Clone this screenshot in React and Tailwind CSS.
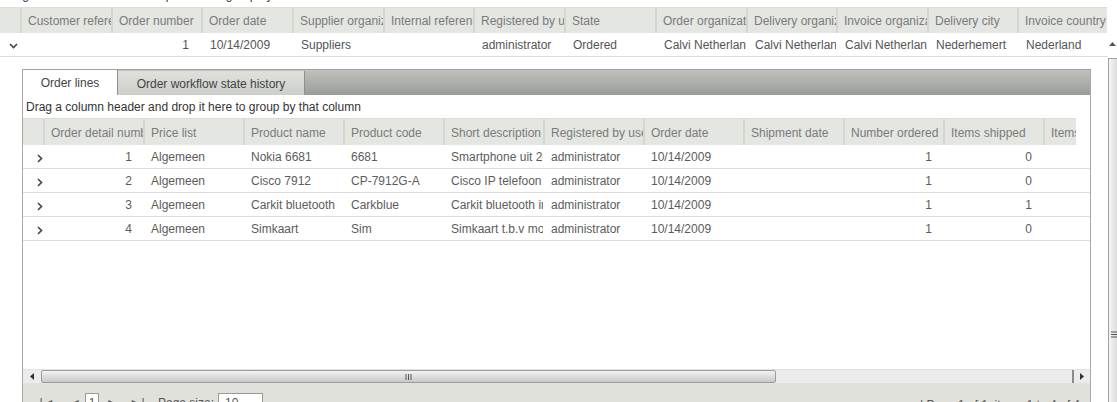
// OrderGrid.jsx
const orderCols = [
  { title: 'Customer reference', w: 'w-[91px]' },
  { title: 'Order number', w: 'w-[90px]' },
  { title: 'Order date', w: 'w-[91px]' },
  { title: 'Supplier organization', w: 'w-[91px]' },
  { title: 'Internal reference', w: 'w-[90px]' },
  { title: 'Registered by user', w: 'w-[91px]' },
  { title: 'State', w: 'w-[91px]' },
  { title: 'Order organization', w: 'w-[91px]' },
  { title: 'Delivery organization', w: 'w-[90px]' },
  { title: 'Invoice organization', w: 'w-[91px]' },
  { title: 'Delivery city', w: 'w-[90px]' },
  { title: 'Invoice country', w: 'w-[90px]' },
];

const order = [
  { v: '', align: 'left' },
  { v: '1', align: 'right' },
  { v: '10/14/2009', align: 'left' },
  { v: 'Suppliers', align: 'left' },
  { v: '', align: 'left' },
  { v: 'administrator', align: 'left' },
  { v: 'Ordered', align: 'left' },
  { v: 'Calvi Netherlands', align: 'left' },
  { v: 'Calvi Netherlands', align: 'left' },
  { v: 'Calvi Netherlands', align: 'left' },
  { v: 'Nederhemert', align: 'left' },
  { v: 'Nederland', align: 'left' },
];

const lineCols = [
  'Order detail number',
  'Price list',
  'Product name',
  'Product code',
  'Short description',
  'Registered by user',
  'Order date',
  'Shipment date',
  'Number ordered',
  'Items shipped',
];

const lines = [
  ['1', 'Algemeen', 'Nokia 6681', '6681', 'Smartphone uit 2005', 'administrator', '10/14/2009', '', '1', '0'],
  ['2', 'Algemeen', 'Cisco 7912', 'CP-7912G-A', 'Cisco IP telefoon', 'administrator', '10/14/2009', '', '1', '0'],
  ['3', 'Algemeen', 'Carkit bluetooth', 'Carkblue', 'Carkit bluetooth inbouw', 'administrator', '10/14/2009', '', '1', '1'],
  ['4', 'Algemeen', 'Simkaart', 'Sim', 'Simkaart t.b.v mobiel', 'administrator', '10/14/2009', '', '1', '0'],
];

const rightCols = [0, 8, 9];

const ChevronDown = () => (
  <svg width="9" height="6" viewBox="0 0 9 6">
    <path d="M1 1l3.5 3.5L8 1" fill="none" stroke="#444" strokeWidth="1.6" />
  </svg>
);

const ChevronRight = () => (
  <svg width="6" height="9" viewBox="0 0 6 9">
    <path d="M1 1l3.5 3.5L1 8" fill="none" stroke="#444" strokeWidth="1.6" />
  </svg>
);

const HeadCell = ({ title, w }) => (
  <div className={`${w} shrink-0 h-full flex items-center pt-px border-l-2 border-[#d4d6d1] pl-[6px] overflow-hidden whitespace-nowrap`}>
    {title}
  </div>
);

const App = () => {
  return (
    <div
      className="w-[1117px] h-[402px] overflow-hidden bg-white text-[12px] relative"
      style={{ fontFamily: '"Liberation Sans", Arial, sans-serif' }}
    >
      {/* group panel of the order grid, mostly scrolled out of view */}
      <div className="h-[7px] overflow-hidden">
        <div className="mt-[-14px] pl-[3px] leading-[18px] text-[#333] whitespace-nowrap">
          Drag a column header and drop it here to group by that column
        </div>
      </div>

      <div className="flex">
        <div className="w-[1108px] shrink-0">
          {/* order header */}
          <div className="h-[26px] flex bg-[#e3e6e1] text-[#7b7b7b] w-[1107px] border-t border-[#dcdcdc]">
            <div className="w-[20px] shrink-0" />
            {orderCols.map((c) => (
              <HeadCell key={c.title} title={c.title} w={c.w} />
            ))}
          </div>

          {/* order row */}
          <div className="h-[24px] flex items-center text-[#555] border-b border-[#dcdcdc]">
            <div className="w-[20px] shrink-0 flex justify-center pl-[6px] pt-[2px]">
              <ChevronDown />
            </div>
            {order.map((cell, i) => (
              <div
                key={i}
                className={`${orderCols[i].w} shrink-0 overflow-hidden whitespace-nowrap ${
                  cell.align === 'right' ? 'text-right pr-[12px]' : 'pl-[9px]'
                }`}
              >
                {cell.v}
              </div>
            ))}
          </div>

          {/* detail panel */}
          <div className="ml-[22px] mt-[12px] w-[1069px] h-[400px] border-x border-[#a8aaa6] flex flex-col">
            <div className="h-[26px] flex bg-gradient-to-b from-[#c0c1bc] to-[#9a9c98] border-t border-[#a0a29e]">
              <div className="w-[95px] h-full bg-white flex items-center justify-center text-[#444] border-r border-[#8e908c]">
                Order lines
              </div>
              <div className="w-[187px] h-[25px] mt-px bg-gradient-to-b from-[#e0e1dd] to-[#cbcdc8] flex items-center justify-center text-[#444] border-r border-[#8e908c]">
                Order workflow state history
              </div>
            </div>

            <div className="h-[23px] flex items-center pl-[3px] text-[#333] bg-white">
              Drag a column header and drop it here to group by that column
            </div>

            {/* lines header */}
            <div className="h-[27px] flex bg-[#e3e6e1] text-[#7b7b7b] w-[1053px] border-t border-[#dcdcdc]">
              <div className="w-[20px] shrink-0" />
              {lineCols.map((t) => (
                <HeadCell key={t} title={t} w="w-[100px]" />
              ))}
              <HeadCell title="Items in backorder" w="w-[33px]" />
            </div>

            {lines.map((row) => (
              <div key={row[0]} className="h-[24px] flex items-center pt-px text-[#5c5c5c] border-b border-[#dcdcdc]">
                <div className="w-[20px] shrink-0 flex justify-center pl-[14px] pt-[2px]">
                  <ChevronRight />
                </div>
                {row.map((v, i) => (
                  <div
                    key={i}
                    className={`w-[100px] shrink-0 overflow-hidden whitespace-nowrap ${
                      rightCols.includes(i) ? 'text-right pr-[11px]' : 'pl-[8px]'
                    }`}
                  >
                    {v}
                  </div>
                ))}
              </div>
            ))}

            <div className="h-[128px]" />

            {/* horizontal scrollbar */}
            <div className="h-[15px] flex items-center bg-[#ececec] border-y border-[#e2e2e2]">
              <div className="w-[18px] flex justify-center">
                <svg width="4" height="7" viewBox="0 0 4 7">
                  <path d="M4 0L0 3.5 4 7z" fill="#333" />
                </svg>
              </div>
              <div className="w-[735px] h-[13px] rounded-[2px] border border-[#9c9c9c] bg-gradient-to-b from-[#f3f3f3] to-[#c9c9c9] flex items-center justify-center">
                <svg width="7" height="6" viewBox="0 0 7 6">
                  <path d="M1 0v6M3.5 0v6M6 0v6" stroke="#555" strokeWidth="1" />
                </svg>
              </div>
              <div className="flex-1" />
              <div className="w-[2px] h-[13px] bg-[#8a8a8a]" />
              <div className="w-[16px] flex justify-center">
                <svg width="4" height="7" viewBox="0 0 4 7">
                  <path d="M0 0L4 3.5 0 7z" fill="#333" />
                </svg>
              </div>
            </div>

            {/* pager */}
            <div className="h-[40px] bg-[#e1e1dc] flex items-start pt-[9px] text-[#555] relative">
              <div className="flex items-center pl-[14px]">
                <span className="w-[20px] text-center">|◄</span>
                <span className="w-[16px] ml-[10px] text-center">◄</span>
                <span className="w-[14px] h-[20px] ml-[2px] border border-[#999] bg-white text-center leading-[18px]">1</span>
                <span className="w-[16px] ml-[5px] text-center">►</span>
                <span className="w-[20px] ml-[7px] text-center">►|</span>
                <span className="ml-[11px]">Page size:</span>
                <span className="w-[45px] h-[20px] ml-[4px] border border-[#999] bg-white pl-[6px] leading-[18px]">10</span>
              </div>
              <div className="ml-auto pr-[10px] pt-[3px]">| Page 1 of 1, items 1 to 4 of 4</div>
            </div>
          </div>
        </div>

        {/* vertical scrollbar of the order grid */}
        <div className="w-[9px] shrink-0 flex flex-col">
          <div className="h-[27px]" />
          <div className="h-[24px] flex justify-center items-start pt-[8px]">
            <svg width="7" height="4" viewBox="0 0 7 4">
              <path d="M0 4L3.5 0 7 4z" fill="#555" />
            </svg>
          </div>
          <div className="h-[400px] border-l border-t border-[#a0a0a0] bg-gradient-to-r from-[#f6f6f6] to-[#dcdcdc] flex flex-col">
            <div className="h-[272px]" />
            <svg width="8" height="7" viewBox="0 0 8 7" className="ml-[2px]">
              <path d="M0 1h8M0 3.5h8M0 6h8" stroke="#555" strokeWidth="1" />
            </svg>
          </div>
        </div>
      </div>
    </div>
  );
};

export default App;
